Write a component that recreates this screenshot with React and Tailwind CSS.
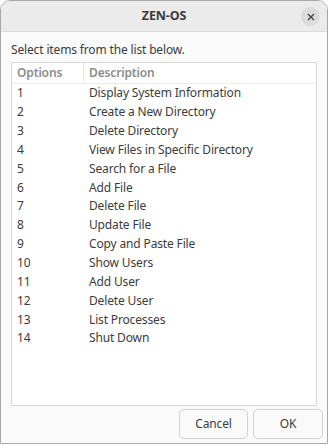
import React from 'react';

const items = [
  'Display System Information',
  'Create a New Directory',
  'Delete Directory',
  'View Files in Specific Directory',
  'Search for a File',
  'Add File',
  'Delete File',
  'Update File',
  'Copy and Paste File',
  'Show Users',
  'Add User',
  'Delete User',
  'List Processes',
  'Shut Down',
];

export default function App() {
  return (
    <div className="w-[329px] h-[445px] bg-white" style={{ fontFamily: '"Noto Sans", "Open Sans", sans-serif' }}>
      <div className="w-[328px] h-[444px] flex flex-col rounded-t-[10px] border border-[#a8a8a8] bg-[#fafafa] overflow-hidden text-[#3c3c3c] tracking-[-0.15px]">
        {/* title bar */}
        <div className="h-[31px] shrink-0 flex items-center justify-center relative bg-[#ebebeb] border-b border-[#dcdcdc]">
          <span className="text-[12.5px] font-bold">ZEN-OS</span>
          <button className="absolute right-[7px] top-[6px] w-[19px] h-[19px] rounded-full bg-[#dcdcdc] flex items-center justify-center text-[#444]">
            <svg width="8" height="8" viewBox="0 0 8 8">
              <path d="M1 1L7 7M7 1L1 7" stroke="currentColor" strokeWidth="1.4" />
            </svg>
          </button>
        </div>

        <div className="flex-1 flex flex-col px-[10px] pt-[9px] pb-[4px]">
          <div className="text-[12px] leading-[18px]">Select items from the list below.</div>
          <div className="mt-[3px] h-[344px] border border-[#d6d6d6] bg-white text-[12px]">
            <div className="flex h-[21px] items-center border-b border-[#ececec] text-[#8c8c8c] font-semibold">
              <div className="w-[72px] pl-[5px] border-r border-[#e6e6e6] h-full flex items-center">Options</div>
              <div className="pl-[5px]">Description</div>
            </div>
            {items.map((d, i) => (
              <div key={i} className="flex h-[18.85px] items-center">
                <div className="w-[72px] pl-[5px]">{i + 1}</div>
                <div className="pl-[5px]">{d}</div>
              </div>
            ))}
          </div>
          <div className="mt-auto flex justify-end gap-[5px] mr-[-6px]">
            <button className="w-[69px] h-[30px] rounded-[5px] border border-[#d2d2d2] bg-[#fafafa] text-[12px]">Cancel</button>
            <button className="w-[70px] h-[30px] rounded-[5px] border border-[#d2d2d2] bg-[#fafafa] text-[12px]">OK</button>
          </div>
        </div>
      </div>
    </div>
  );
}
